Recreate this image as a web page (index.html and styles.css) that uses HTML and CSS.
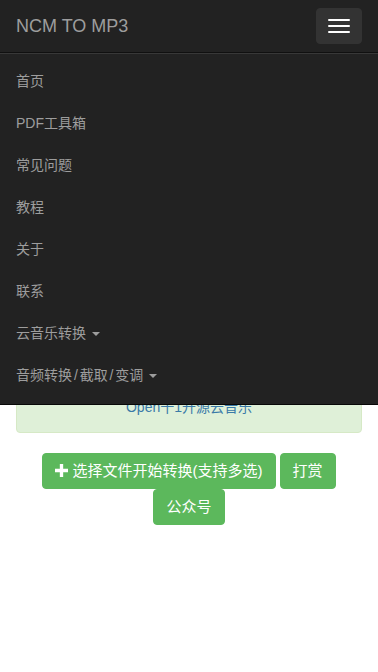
FILE: index.html
```html
<!DOCTYPE html>
<html lang="zh-CN">
<head>
<meta charset="utf-8">
<meta name="viewport" content="width=device-width, initial-scale=1">
<title>NCM TO MP3</title>
<link rel="stylesheet" href="styles.css">
</head>
<body>
<nav class="navbar">
  <div class="navbar-header">
    <a class="brand" href="#">NCM TO MP3</a>
    <button class="toggle" type="button" aria-label="menu">
      <span class="bar"></span><span class="bar"></span><span class="bar"></span>
    </button>
  </div>
  <div class="collapse">
    <ul class="nav">
      <li><a href="#">首页</a></li>
      <li><a href="#">PDF工具箱</a></li>
      <li><a href="#">常见问题</a></li>
      <li><a href="#">教程</a></li>
      <li><a href="#">关于</a></li>
      <li><a href="#">联系</a></li>
      <li><a href="#">云音乐转换 <span class="caret"></span></a></li>
      <li><a href="#">音频转换 / 截取 / 变调 <span class="caret"></span></a></li>
    </ul>
  </div>
</nav>
<main class="container">
  <div class="alert">
    <p class="alert-line">在线将网易云音乐NCM格式文件转换为MP3</p>
    <p class="alert-line">文件不会上传到服务器，所有转换均在浏览器完成</p>
    <p class="alert-line"><a class="alert-link" href="#">Open十1开源云音乐</a></p>
  </div>
  <div class="actions">
    <button class="btn" type="button"><svg class="plus" viewBox="0 0 14 14" width="13" height="13"><path d="M5.2 0h3.6v5.2H14v3.6H8.8V14H5.2V8.8H0V5.2h5.2z" fill="#fff"/></svg> 选择文件开始转换(支持多选)</button>
    <button class="btn" type="button">打赏</button>
    <button class="btn" type="button">公众号</button>
  </div>
</main>
</body>
</html>
```
FILE: styles.css
```css
* { box-sizing: border-box; }
html, body { margin: 0; padding: 0; }
body {
  font-family: "Liberation Sans", "Noto Sans CJK SC", sans-serif;
  font-size: 14px;
  line-height: 20px;
  color: #333;
  background: #fff;
  min-height: 672px;
}
a { text-decoration: none; }

.navbar {
  position: absolute;
  top: 0;
  left: 0;
  right: 0;
  z-index: 10;
  background: #222;
  border-bottom: 1px solid #080808;
}
.navbar-header {
  height: 52px;
  display: flex;
  justify-content: space-between;
  align-items: flex-start;
  padding: 0 16px;
}
.brand {
  color: #9d9d9d;
  font-size: 18px;
  line-height: 52px;
}
.toggle {
  margin-top: 8px;
  width: 46px;
  height: 36px;
  padding: 0;
  background: #333;
  border: 1px solid #333;
  border-radius: 4px;
  display: flex;
  flex-direction: column;
  align-items: center;
  justify-content: center;
  gap: 4px;
}
.bar {
  display: block;
  width: 22px;
  height: 2px;
  background: #fff;
  border-radius: 1px;
}
.collapse {
  border-top: 1px solid #101010;
  box-shadow: inset 0 1px 0 rgba(255,255,255,0.1);
}
.nav {
  list-style: none;
  margin: 7px 0 8px;
  padding: 0;
}
.nav a {
  display: block;
  padding: 10px 16px;
  line-height: 22px;
  color: #9d9d9d;
  font-size: 14px;
  word-spacing: -2px;
}
.caret {
  display: inline-block;
  width: 0;
  height: 0;
  margin-left: 4px;
  vertical-align: middle;
  border-top: 4px solid #9d9d9d;
  border-left: 4px solid transparent;
  border-right: 4px solid transparent;
}

.container {
  padding: 341px 16px 0;
}
.alert {
  background: #dff0d8;
  border: 1px solid #d6e9c6;
  border-radius: 4px;
  padding: 15px;
  color: #3c763d;
  text-align: center;
  margin-bottom: 20px;
}
.alert-line { margin: 0; line-height: 20px; }
.alert-link { color: #3a7aa8; }

.actions {
  text-align: center;
  font-size: 0;
  line-height: 0;
}
.btn {
  display: inline-block;
  vertical-align: top;
  margin: 0 2px;
  font-family: "Liberation Sans", "Noto Sans CJK SC", sans-serif;
  font-size: 15px;
  line-height: 22px;
  padding: 6px 12px;
  color: #fff;
  background: #5cb85c;
  border: 1px solid #5cb85c;
  border-radius: 4px;
}
.plus { vertical-align: -1px; }
```
